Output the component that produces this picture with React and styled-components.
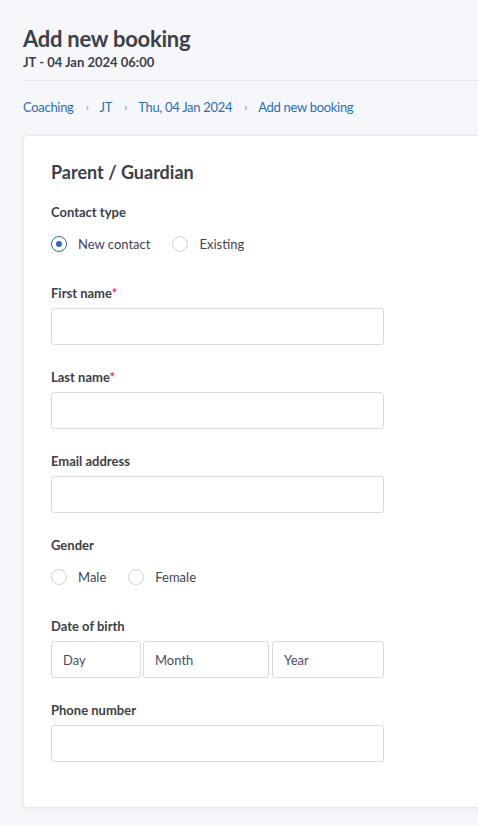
import React from 'react';
import styled, { createGlobalStyle } from 'styled-components';

const GlobalStyle = createGlobalStyle`
  html, body {
    margin: 0;
    padding: 0;
    background: #f6f7fa;
    font-family: Lato, "Open Sans", "Liberation Sans", sans-serif;
    color: #3d4048;
  }
  * { box-sizing: border-box; }
`;

const Page = styled.div`
  padding: 25px 0 19px 23px;
  overflow: hidden;
  min-height: 826px;
`;

const Header = styled.div`
  padding-bottom: 9px;
  border-bottom: 1px solid #e6e8ec;
`;

const Title = styled.h1`
  margin: 0;
  font-size: 22px;
  line-height: 28px;
  font-weight: 700;
  letter-spacing: -0.25px;
  color: #3d4048;
`;

const Subtitle = styled.div`
  font-size: 13px;
  line-height: 18px;
  font-weight: 700;
  color: #3d4048;
`;

const Crumbs = styled.nav`
  display: flex;
  align-items: center;
  margin: 17px 0 19px;
  font-size: 13px;
  line-height: 18px;
  letter-spacing: -0.3px;
`;

const Crumb = styled.a`
  color: #2d6db4;
  text-decoration: none;
`;

const Sep = styled.span`
  color: #8a8f99;
  font-size: 11px;
  width: 25px;
  margin-left: 1px;
  text-align: center;
`;

const Card = styled.section`
  width: calc(100% + 20px);
  background: #fff;
  border: 1px solid #e7e9ed;
  border-radius: 4px;
  box-shadow: 0 2px 6px rgba(30, 40, 60, 0.05);
  padding: 24px 27px 45px;
`;

const CardTitle = styled.h2`
  margin: 0 0 19px;
  font-size: 18px;
  line-height: 24px;
  font-weight: 700;
  color: #3d4048;
`;

const Fields = styled.div`
  display: flex;
  flex-direction: column;
  gap: 23px;
  width: 333px;
`;

const Field = styled.div`
  display: flex;
  flex-direction: column;
`;

const Label = styled.label`
  font-size: 13px;
  line-height: 18px;
  font-weight: 700;
  color: #3d4048;
  margin-bottom: ${(p) => (p.$tight ? '5px' : '6px')};
`;

const Req = styled.span`
  color: #e8315b;
`;

const Input = styled.input`
  width: 100%;
  height: 37px;
  border: 1px solid #d9dbe0;
  border-radius: 3px;
  background: #fff;
  padding: 0 11px;
  font: inherit;
  font-size: 13px;
  color: #454956;
  outline: none;
  &::placeholder {
    color: #4a4e5a;
  }
`;

const DateRow = styled.div`
  display: grid;
  grid-template-columns: 90px 126px 1fr;
  column-gap: 2px;
  & > :nth-child(3) { margin-left: 1px; width: calc(100% - 1px); }
`;

const RadioRow = styled.div`
  display: flex;
  align-items: center;
  height: 35px;
  gap: 22px;
`;

const RadioOption = styled.label`
  display: flex;
  align-items: center;
  gap: 11px;
  font-size: 13px;
  color: #3f4457;
  cursor: pointer;
`;

const Circle = styled.span`
  width: 16px;
  height: 16px;
  border-radius: 50%;
  border: 1px solid ${(p) => (p.$checked ? '#2d6db4' : '#cfd2d8')};
  display: flex;
  align-items: center;
  justify-content: center;
  background: #fff;
  &::after {
    content: '';
    width: 6px;
    height: 6px;
    border-radius: 50%;
    background: ${(p) => (p.$checked ? '#2d6db4' : 'transparent')};
  }
`;

const Radio = ({ checked, children }) => (
  <RadioOption>
    <Circle $checked={checked} />
    {children}
  </RadioOption>
);

const crumbs = ['Coaching', 'JT', 'Thu, 04 Jan 2024', 'Add new booking'];

export default function App() {
  return (
    <>
      <GlobalStyle />
      <Page>
        <Header>
          <Title>Add new booking</Title>
          <Subtitle>JT - 04 Jan 2024 06:00</Subtitle>
        </Header>
        <Crumbs>
          {crumbs.map((c, i) => (
            <React.Fragment key={c}>
              {i > 0 && <Sep>›</Sep>}
              <Crumb href="#">{c}</Crumb>
            </React.Fragment>
          ))}
        </Crumbs>
        <Card>
          <CardTitle>Parent / Guardian</CardTitle>
          <Fields>
            <Field>
              <Label $tight>Contact type</Label>
              <RadioRow>
                <Radio checked>New contact</Radio>
                <Radio>Existing</Radio>
              </RadioRow>
            </Field>
            <Field>
              <Label>First name<Req>*</Req></Label>
              <Input />
            </Field>
            <Field>
              <Label>Last name<Req>*</Req></Label>
              <Input />
            </Field>
            <Field>
              <Label>Email address</Label>
              <Input />
            </Field>
            <Field>
              <Label $tight>Gender</Label>
              <RadioRow>
                <Radio>Male</Radio>
                <Radio>Female</Radio>
              </RadioRow>
            </Field>
            <Field>
              <Label>Date of birth</Label>
              <DateRow>
                <Input placeholder="Day" />
                <Input placeholder="Month" />
                <Input placeholder="Year" />
              </DateRow>
            </Field>
            <Field>
              <Label>Phone number</Label>
              <Input />
            </Field>
          </Fields>
        </Card>
      </Page>
    </>
  );
}
